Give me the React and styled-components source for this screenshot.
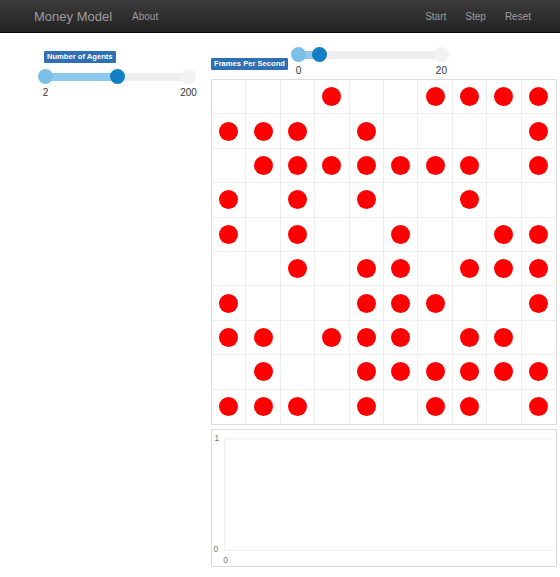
import React from "react";
import styled, { createGlobalStyle } from "styled-components";

const GlobalStyle = createGlobalStyle`
  body {
    margin: 0;
    background: #fff;
    color: #333;
    font-family: "Liberation Sans", Arial, sans-serif;
  }
`;

// navbar
const Navbar = styled.nav`
  height: 33px;
  box-sizing: border-box;
  display: flex;
  align-items: center;
  padding: 0 29px 0 34px;
  background: linear-gradient(to bottom, #3c3c3c 0, #222 100%);
  border-bottom: 1px solid #080808;
`;

const Brand = styled.span`
  font-size: 13px;
  color: #9d9d9d;
  margin-right: 20px;
`;

const NavLink = styled.a`
  font-size: 10px;
  color: #9d9d9d;
  text-decoration: none;
  cursor: pointer;
`;

const NavRight = styled.div`
  margin-left: auto;
  display: flex;
  gap: 19px;
`;

// page
const Main = styled.main`
  display: flex;
  align-items: flex-start;
`;

const Sidebar = styled.aside`
  width: 211px;
  box-sizing: border-box;
  padding: 18px 0 0 38px;
`;

const Content = styled.section`
  width: 346px;
  padding-top: 14px;
  display: flex;
  flex-direction: column;
`;

const Tag = styled.span`
  display: inline-block;
  height: 12px;
  line-height: 12px;
  padding: 0 3px;
  background: #2f6fb3;
  color: #fff;
  font-size: 7.6px;
  font-weight: bold;
  border-radius: 1px;
  white-space: nowrap;
  margin-left: ${(p) => p.indent || 0}px;
`;

const SliderWrap = styled.div`
  width: ${(p) => p.width}px;
`;

const Track = styled.div`
  position: relative;
  height: 16px;
  &::before {
    content: "";
    position: absolute;
    left: 4px;
    right: 4px;
    top: 4px;
    height: 8px;
    border-radius: 4px;
    background: #eeeeee;
  }
`;

const Fill = styled.div`
  position: absolute;
  top: 4px;
  height: 8px;
  left: 7px;
  background: #8dc9ec;
`;

const Handle = styled.div`
  position: absolute;
  top: 0;
  width: 15px;
  height: 15px;
  margin-left: -7px;
  border-radius: 50%;
  background: ${(p) =>
    p.kind === "value" ? "#127ec3" : p.kind === "min" ? "#7bbfe8" : "#f2f2f2"};
`;

const Ends = styled.div`
  display: flex;
  justify-content: space-between;
  margin-top: 2px;
`;

const EndLabel = styled.span`
  width: 15px;
  display: flex;
  justify-content: center;
  white-space: nowrap;
  font-size: 10px;
  line-height: 12px;
`;

function Slider({ width, min, max, value }) {
  const span = width - 15;
  const pos = 7 + ((value - min) / (max - min)) * span;
  return (
    <SliderWrap width={width}>
      <Track>
        <Fill style={{ width: pos - 7 }} />
        <Handle kind="min" style={{ left: 7 }} />
        <Handle kind="value" style={{ left: pos }} />
        <Handle kind="max" style={{ left: 7 + span }} />
      </Track>
      <Ends>
        <EndLabel>{min}</EndLabel>
        <EndLabel>{max}</EndLabel>
      </Ends>
    </SliderWrap>
  );
}

const AgentsBlock = styled.div`
  display: flex;
  flex-direction: column;
  align-items: flex-start;
  gap: 6px;
`;

const FpsRow = styled.div`
  display: flex;
  align-items: flex-start;
  height: 32px;
`;

const FpsTag = styled(Tag)`
  margin-top: 11px;
  margin-right: 3px;
`;

// grid
const Grid = styled.div`
  width: 346px;
  height: 346px;
  box-sizing: border-box;
  border: 1px solid #dcdcdc;
  display: grid;
  grid-template-columns: repeat(10, 1fr);
  grid-template-rows: repeat(10, 1fr);
`;

const Cell = styled.div`
  display: flex;
  align-items: center;
  justify-content: center;
  border-right: 1px solid #eeeeee;
  border-bottom: 1px solid #eeeeee;
  &:nth-child(10n) {
    border-right: none;
  }
  &:nth-last-child(-n + 10) {
    border-bottom: none;
  }
`;

const Dot = styled.div`
  width: 19px;
  height: 19px;
  border-radius: 50%;
  background: #ff0000;
`;

const Chart = styled.svg`
  display: block;
  margin-top: 4px;
  width: 346px;
  height: 138px;
  box-sizing: border-box;
  border: 1px solid #dcdcdc;
  font-family: "Liberation Sans", Arial, sans-serif;
`;

const agents = [
  "...x..xxxx",
  "xxx.x....x",
  ".xxxxxxx.x",
  "x.x.x..x..",
  "x.x..x..xx",
  "..x.xx.xxx",
  "x...xxx..x",
  "xx.xxx.xx.",
  ".x..xxxxxx",
  "xxx.x.xx.x",
];

export default function App() {
  return (
    <>
      <GlobalStyle />
      <Navbar>
        <Brand>Money Model</Brand>
        <NavLink>About</NavLink>
        <NavRight>
          <NavLink>Start</NavLink>
          <NavLink>Step</NavLink>
          <NavLink>Reset</NavLink>
        </NavRight>
      </Navbar>
      <Main>
        <Sidebar>
          <AgentsBlock>
            <Tag indent={6}>Number of Agents</Tag>
            <Slider width={158} min={2} max={200} value={101} />
          </AgentsBlock>
        </Sidebar>
        <Content>
          <FpsRow>
            <FpsTag>Frames Per Second</FpsTag>
            <Slider width={158} min={0} max={20} value={3} />
          </FpsRow>
          <Grid>
            {agents.map((row, r) =>
              row.split("").map((c, i) => (
                <Cell key={`${r}-${i}`}>{c === "x" && <Dot />}</Cell>
              ))
            )}
          </Grid>
          <Chart viewBox="0 0 346 138">
            <line x1="11" y1="9" x2="345" y2="9" stroke="#f0f0f0" />
            <line x1="11" y1="122" x2="345" y2="122" stroke="#ececec" />
            <line x1="11.5" y1="8" x2="11.5" y2="123" stroke="#ececec" />
            <text x="1" y="11" fontSize="8.5" fill="#777">1</text>
            <text x="0" y="124" fontSize="8.5" fill="#777">0</text>
            <text x="10" y="135" fontSize="8.5" fill="#777">0</text>
          </Chart>
        </Content>
      </Main>
    </>
  );
}
